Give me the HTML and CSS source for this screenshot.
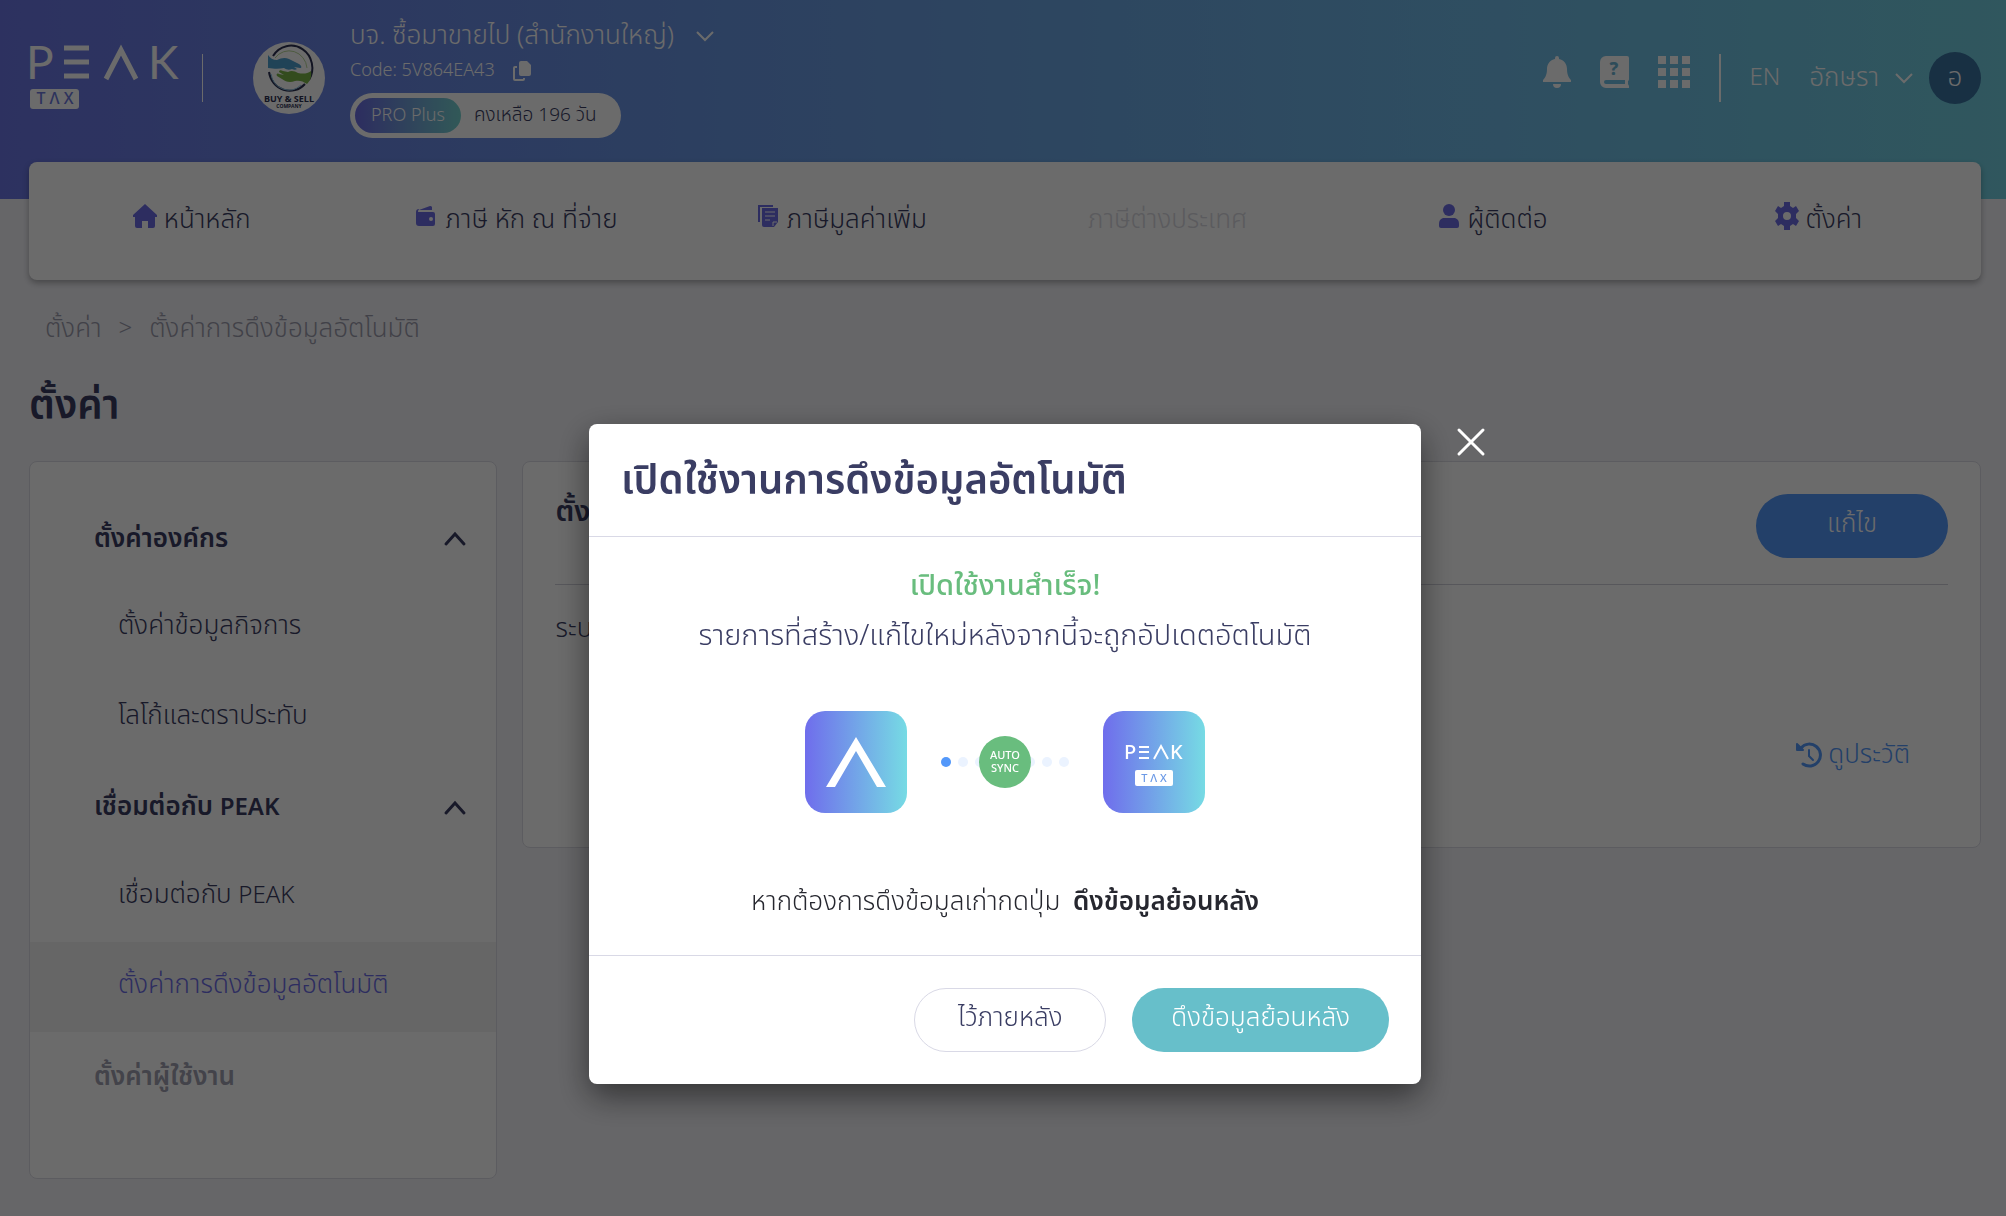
FILE: index.html
```html
<!DOCTYPE html>
<html lang="th">
<head>
    <meta charset="UTF-8">
    <meta name="viewport" content="width=device-width, initial-scale=1.0">
    <title>PEAK TAX</title>
    <link rel="stylesheet" href="styles.css">
</head>
<body>

<header class="header">
    <div class="topbar">
        <a href="#" class="brand" aria-label="PEAK TAX">
            <svg width="148" height="64" viewBox="0 0 148 64">
                <text class="brand-letters" x="-4" y="34">P</text>
                <path d="M34 3h25M34 17h25M34 31h25" fill="none" stroke="#fff" stroke-width="5"/>
                <path d="M76 34L91 5l15 29" fill="none" stroke="#fff" stroke-width="5"/>
                <text class="brand-letters" x="118" y="34">K</text>
                <rect x="0" y="44" width="49" height="20" rx="3" fill="#fff"/>
                <text class="brand-tax" x="25" y="59" text-anchor="middle">T Λ X</text>
            </svg>
        </a>
        <span class="line"></span>
        <svg class="company-logo" width="72" height="72" viewBox="0 0 72 72">
            <circle cx="36" cy="36" r="36" fill="#fff"/>
            <path d="M20 14a21 22 0 0 1 36 24M52 42a21 22 0 0 1-36-12" fill="none" stroke="#2c3052" stroke-width="2"/>
            <path d="M22 16a18 19 0 0 1 32 10" fill="none" stroke="#b9d89a" stroke-width="1"/>
            <path d="M48 43a18 19 0 0 1-30-11" fill="none" stroke="#8cc4e4" stroke-width="1"/>
            <path d="M15 13c2 3 5 5 9 5 4-2 8-3 12-1l10 5c3 2 3 4 1 4l-6-1 3 2c-1 1-3 1-5 0-3 1-5 1-8-1-5 1-9 1-16 0z" fill="#4d9fd0"/>
            <path d="M58 29c1 6-1 10-4 13-4-3-8-4-12-3-5 2-9 1-13-2l-5-3c-1-2 0-3 2-2l5 1-5-3c0-2 2-2 4-1l5 1c3-2 7-1 10 1 5 1 9 1 13-2z" fill="#7ab648"/>
            <text x="36" y="60" class="logo-name" text-anchor="middle">BUY &amp; SELL</text>
            <text x="36" y="66" class="logo-sub" text-anchor="middle">COMPANY</text>
        </svg>
        <div class="company">
            <button class="company-name">บจ. ซื้อมาขายไป (สำนักงานใหญ่)
                <svg width="18" height="12" viewBox="0 0 18 12" fill="none" stroke="currentColor" stroke-width="2"><path d="M1 2l8 8 8-8"/></svg>
            </button>
            <div class="company-code">Code: 5V864EA43
                <button class="copy" aria-label="Copy">
                    <svg width="18" height="20" viewBox="0 0 18 20" fill="currentColor"><path d="M8 0h6l4 4v9a2 2 0 0 1-2 2H8a2 2 0 0 1-2-2V2a2 2 0 0 1 2-2z"/><path d="M4 5H2a2 2 0 0 0-2 2v11a2 2 0 0 0 2 2h8a2 2 0 0 0 2-2v-1h-2v1H2V7h2z"/></svg>
                </button>
            </div>
            <div class="plan"><span class="plan-name">PRO Plus</span>คงเหลือ 196 วัน</div>
        </div>
        <div class="tools">
            <button class="tool" aria-label="Notifications">
                <svg width="28" height="32" viewBox="0 0 28 32" fill="currentColor"><path d="M14 0a2 2 0 0 1 2 2v1c5 1 8 5 8 10 0 6 2 9 4 11v2H0v-2c2-2 4-5 4-11C4 8 7 4 12 3V2a2 2 0 0 1 2-2zM10 28h8a4 4 0 0 1-8 0z"/></svg>
            </button>
            <button class="tool" aria-label="Help">
                <svg width="29" height="32" viewBox="0 0 29 32"><path fill="currentColor" fill-rule="evenodd" d="M6 0h21a2 2 0 0 1 2 2v21a2 2 0 0 1-1 2v3l1 2v2H6a6 6 0 0 1-6-6V6a6 6 0 0 1 6-6zM6 24a2 2 0 0 0 0 4h19v-4z"/><text x="14" y="19" class="book-mark" text-anchor="middle">?</text></svg>
            </button>
            <button class="tool" aria-label="Apps">
                <svg width="32" height="32" viewBox="0 0 32 32" fill="currentColor"><path d="M0 0h8v8H0zM12 0h8v8h-8zM24 0h8v8h-8zM0 12h8v8H0zM12 12h8v8h-8zM24 12h8v8h-8zM0 24h8v8H0zM12 24h8v8h-8zM24 24h8v8h-8z"/></svg>
            </button>
            <span class="line thick"></span>
            <button class="latin">EN</button>
            <button class="user">อักษรา
                <svg width="18" height="12" viewBox="0 0 18 12" fill="none" stroke="currentColor" stroke-width="2"><path d="M1 2l8 8 8-8"/></svg>
                <span class="avatar">อ</span>
            </button>
        </div>
    </div>
    <nav class="menu">
        <a href="#"><svg width="24" height="24" viewBox="0 0 24 24" fill="currentColor"><path d="M12 0l12 11v2h-2v9a2 2 0 0 1-2 2h-5v-7H9v7H4a2 2 0 0 1-2-2v-9H0v-2z"/></svg>หน้าหลัก</a>
        <a href="#"><svg width="22" height="24" viewBox="0 0 22 24"><path fill="currentColor" d="M3 6l11-4a2 2 0 0 1 2 1v3zM2 8h15a2 2 0 0 1 2 2v10a2 2 0 0 1-2 2H3a3 3 0 0 1-3-3V8a3 3 0 0 1 3-3z"/><circle cx="15" cy="15" r="2" fill="#fff"/><path d="M2 7h15" stroke="#fff"/></svg>ภาษี หัก ณ ที่จ่าย</a>
        <a href="#"><svg width="22" height="24" viewBox="0 0 22 24"><path d="M1 18V2h14" fill="none" stroke="currentColor" stroke-width="2"/><path fill="currentColor" d="M4 4h16v14l-4 5H6a2 2 0 0 1-2-2z"/><path d="M7 8h10M7 12h10M7 16h5M15 22v-4h4" fill="none" stroke="#fff"/></svg>ภาษีมูลค่าเพิ่ม</a>
        <a href="#" class="disabled">ภาษีต่างประเทศ</a>
        <a href="#"><svg width="22" height="24" viewBox="0 0 22 24" fill="currentColor"><circle cx="11" cy="6" r="6"/><path d="M5 14h12c3 1 4 3 4 6v2a2 2 0 0 1-2 2H3a2 2 0 0 1-2-2v-2c0-3 1-5 4-6z"/></svg>ผู้ติดต่อ</a>
        <a href="#"><svg width="24" height="28" viewBox="0 0 24 28" fill="currentColor" fill-rule="evenodd"><path d="M9 0h6v4l3 2 3-2 3 5-3 3v4l3 3-3 5-3-2-3 2v4H9v-4l-3-2-3 2-3-5 3-3v-4L0 9l3-5 3 2 3-2zM12 10a4 4 0 1 0 0 8 4 4 0 0 0 0-8z"/></svg>ตั้งค่า</a>
    </nav>
</header>

<main class="page">
    <div class="breadcrumb"><a href="#">ตั้งค่า</a><span class="latin">&gt;</span><a href="#">ตั้งค่าการดึงข้อมูลอัตโนมัติ</a></div>
    <h1>ตั้งค่า</h1>
    <div class="columns">
        <aside class="card sidebar">
            <button class="group">ตั้งค่าองค์กร
                <svg width="22" height="14" viewBox="0 0 22 14" fill="none" stroke="currentColor" stroke-width="3" stroke-linecap="round"><path d="M2 12l9-10 9 10"/></svg>
            </button>
            <a href="#" class="sub">ตั้งค่าข้อมูลกิจการ</a>
            <a href="#" class="sub">โลโก้และตราประทับ</a>
            <button class="group"><span>เชื่อมต่อกับ <span class="latin">PEAK</span></span>
                <svg width="22" height="14" viewBox="0 0 22 14" fill="none" stroke="currentColor" stroke-width="3" stroke-linecap="round"><path d="M2 12l9-10 9 10"/></svg>
            </button>
            <a href="#" class="sub"><span>เชื่อมต่อกับ <span class="latin">PEAK</span></span></a>
            <a href="#" class="sub active">ตั้งค่าการดึงข้อมูลอัตโนมัติ</a>
            <button class="group muted">ตั้งค่าผู้ใช้งาน</button>
        </aside>
        <section class="card content">
            <div class="content-head">
                <h2>ตั้งค่า</h2>
                <button class="btn btn-blue">แก้ไข</button>
            </div>
            <p>ระบบ</p>
            <a href="#" class="history">
                <svg width="26" height="26" viewBox="0 0 26 26" fill="none" stroke="currentColor" stroke-width="3" stroke-linecap="round"><path d="M5 6a11 11 0 1 1 2 16"/><path d="M13 8v6l4 4" stroke-width="2"/><path d="M1 2v6h6z" fill="currentColor" stroke-width="2" stroke-linejoin="round"/></svg>ดูประวัติ</a>
        </section>
    </div>
</main>

<div class="overlay">
    <div class="modal" role="dialog" aria-modal="true" aria-labelledby="modalTitle">
        <button class="close" aria-label="Close">
            <svg width="28" height="28" viewBox="0 0 28 28" fill="none" stroke="currentColor" stroke-width="3" stroke-linecap="round"><path d="M2 2l24 24M26 2L2 26"/></svg>
        </button>
        <div class="modal-header"><h2 id="modalTitle">เปิดใช้งานการดึงข้อมูลอัตโนมัติ</h2></div>
        <div class="modal-body">
            <p class="success">เปิดใช้งานสำเร็จ!</p>
            <p class="lead">รายการที่สร้าง/แก้ไขใหม่หลังจากนี้จะถูกอัปเดตอัตโนมัติ</p>
            <svg class="sync" width="400" height="102" viewBox="0 0 400 102">
                <defs>
                    <linearGradient id="tile"><stop offset="0" stop-color="#6f6dec"/><stop offset="1" stop-color="#76dbe4"/></linearGradient>
                </defs>
                <rect width="102" height="102" rx="20" fill="url(#tile)"/>
                <path d="M51 26l30 50h-9L51 40 30 76h-9z" fill="#fff"/>
                <circle cx="141" cy="51" r="5" fill="#5398fa"/>
                <g fill="#ebf3ff"><circle cx="158" cy="51" r="5"/><circle cx="175" cy="51" r="5"/><circle cx="225" cy="51" r="5"/><circle cx="242" cy="51" r="5"/><circle cx="259" cy="51" r="5"/></g>
                <circle cx="200" cy="51" r="26" fill="#69bd7e"/>
                <text class="sync-text" x="200" y="48" text-anchor="middle">AUTO</text>
                <text class="sync-text" x="200" y="61" text-anchor="middle">SYNC</text>
                <rect x="298" width="102" height="102" rx="20" fill="url(#tile)"/>
                <g class="tile-letters"><text x="319" y="48">P</text><text x="365" y="48">K</text></g>
                <path d="M334 36h10M334 41h10M334 47h10M349 48l7-13 7 13" fill="none" stroke="#fff" stroke-width="2"/>
                <rect x="330" y="59" width="38" height="16" rx="2" fill="#fff"/>
                <text class="tile-tax" x="349" y="71" text-anchor="middle">T Λ X</text>
            </svg>
            <p class="note">หากต้องการดึงข้อมูลเก่ากดปุ่ม <strong>ดึงข้อมูลย้อนหลัง</strong></p>
        </div>
        <div class="modal-footer">
            <button class="btn btn-plain">ไว้ภายหลัง</button>
            <button class="btn btn-teal">ดึงข้อมูลย้อนหลัง</button>
        </div>
    </div>
</div>

</body>
</html>
```

FILE: styles.css
```css
* {
    box-sizing: border-box;
}
body {
    margin: 0;
    font-family: "Noto Sans Thai", "Noto Sans", sans-serif;
    font-size: 26px;
    font-weight: 300;
    line-height: 36px;
    color: #3a3d63;
    background: #f3f3f8;
}
h1, h2, p {
    margin: 0;
}
a {
    color: inherit;
    text-decoration: none;
}
button {
    padding: 0;
    border: none;
    background: none;
    font: inherit;
    color: inherit;
    cursor: pointer;
}
svg {
    flex: none;
    overflow: visible;
}
.latin {
    font-size: 24px;
}
.header {
    padding: 0 25px 0 29px;
    background: linear-gradient(90deg, #6b76e4, #6a98e4 36%, #70bbe6 75%, #72cfe0) no-repeat;
    background-size: 100% 199px;
}
.topbar {
    display: flex;
    align-items: flex-start;
    height: 162px;
    color: #fff;
}
.brand {
    margin: 45px 24px 0 1px;
    height: 64px;
}
.brand-letters {
    font-family: Lato, sans-serif;
    font-size: 46px;
    font-weight: 400;
    fill: #fff;
}
.brand-tax {
    font-size: 16px;
    font-weight: 500;
    fill: #6c78dc;
}
.line {
    width: 1px;
    height: 48px;
    margin-top: 54px;
    background: #fff;
}
.line.thick {
    width: 2px;
    margin: 0;
}
.company-logo {
    margin: 42px 25px 0 50px;
}
.logo-name {
    font-size: 9px;
    font-weight: 700;
    fill: #2c3052;
}
.logo-sub {
    font-size: 5px;
    font-weight: 700;
    fill: #2c3052;
}
.company {
    display: flex;
    flex-direction: column;
    align-items: flex-start;
    padding-top: 18px;
}
.company-name {
    display: flex;
    align-items: center;
    gap: 22px;
}
.company-code {
    display: flex;
    align-items: center;
    gap: 18px;
    font-size: 18px;
    line-height: 34px;
}
.copy {
    display: flex;
}
.plan {
    display: flex;
    align-items: center;
    gap: 13px;
    margin-top: 5px;
    padding: 5px 24px 5px 5px;
    border-radius: 23px;
    font-size: 19px;
    line-height: 35px;
    color: #3a3d63;
    background: #fff;
}
.plan-name {
    padding: 0 16px;
    border-radius: 18px;
    font-size: 18px;
    color: #fff;
    background: linear-gradient(90deg, #6c6ce4, #76d3d0);
}
.tools {
    display: flex;
    align-items: center;
    gap: 29px;
    margin: 52px 0 0 auto;
}
.tool {
    display: flex;
    margin-bottom: 12px;
}
.book-mark {
    font-size: 18px;
    font-weight: 800;
    fill: #6fb5d5;
}
.user {
    display: flex;
    align-items: center;
    gap: 16px;
}
.avatar {
    width: 52px;
    height: 52px;
    border-radius: 50%;
    line-height: 52px;
    background: #39729f;
}
.menu {
    display: grid;
    grid-template-columns: repeat(6, 1fr);
    height: 118px;
    padding-bottom: 2px;
    border-radius: 8px;
    background: #fff;
    box-shadow: 0 3px 6px rgba(0, 0, 0, 0.3);
}
.menu a {
    display: flex;
    align-items: center;
    justify-content: center;
    gap: 7px;
}
.menu svg {
    margin-bottom: 8px;
    color: #6c6ce4;
}
.menu .disabled {
    color: #d8d8e0;
}
.page {
    padding: 29px 25px 0 29px;
}
.breadcrumb {
    display: flex;
    gap: 17px;
    padding-left: 16px;
    line-height: 40px;
    color: #9c9cac;
}
h1 {
    margin: 28px 0 24px;
    font-size: 40px;
    font-weight: 600;
    line-height: 60px;
}
.columns {
    display: flex;
    align-items: flex-start;
    gap: 25px;
}
.card {
    border: 1px solid #dcdce4;
    border-radius: 8px;
    background: #fff;
}
.sidebar {
    width: 24%;
    padding: 32px 0 57px;
}
.group, .sub {
    display: flex;
    align-items: center;
    width: 100%;
}
.group {
    justify-content: space-between;
    height: 89px;
    padding: 0 30px 0 64px;
    font-weight: 600;
}
.sub {
    height: 90px;
    padding: 0 0 4px 88px;
}
.active {
    color: #6c6ce4;
    background: #f3f3f3;
}
.muted {
    color: #a0a0b0;
}
.content {
    flex: 1;
    height: 387px;
    padding: 32px;
}
.content-head {
    display: flex;
    justify-content: space-between;
    height: 91px;
    border-bottom: 1px solid #d0d0da;
}
.content h2 {
    font-size: 29px;
    font-weight: 600;
}
.content p {
    margin-top: 26px;
}
.btn {
    height: 64px;
    min-width: 192px;
    padding: 0 39px 4px;
    border-radius: 32px;
}
.btn-blue {
    color: #fff;
    background: #5398fa;
}
.btn-plain {
    border: 1px solid #d9d9e6;
}
.btn-teal {
    color: #fff;
    background: #67bfca;
}
.history {
    display: flex;
    align-items: center;
    justify-content: flex-end;
    gap: 6px;
    margin: 90px 38px 0 0;
    color: #5398fa;
}
.overlay {
    position: fixed;
    inset: 0;
    display: flex;
    justify-content: center;
    align-items: flex-start;
    padding: 424px 0 0 4px;
    background: rgba(0, 0, 0, 0.58);
}
.modal {
    position: relative;
    width: 832px;
    border-radius: 8px;
    background: #fff;
    box-shadow: 0 12px 32px rgba(0, 0, 0, 0.5);
}
.close {
    position: absolute;
    top: 4px;
    right: -64px;
    height: 28px;
    line-height: 0;
    color: #fff;
}
.modal-header {
    padding: 34px 32px 30px;
    border-bottom: 1px solid #d9d9e6;
}
.modal-header h2 {
    font-size: 40px;
    font-weight: 600;
    line-height: 48px;
}
.modal-body {
    padding: 24px 32px;
    text-align: center;
    height: 418px;
}
.success, .lead {
    font-size: 29px;
    line-height: 50px;
}
.success {
    font-weight: 500;
    color: #69bd7e;
}
.sync {
    display: block;
    margin: 50px auto 64px;
}
.sync-text {
    font-size: 11px;
    font-weight: 500;
    fill: #fff;
}
.tile-letters {
    font-size: 20px;
    font-weight: 500;
    fill: #fff;
}
.tile-tax {
    font-size: 11px;
    font-weight: 500;
    fill: #6c9ae6;
}
.note {
    line-height: 50px;
    color: #26272f;
}
.note strong {
    margin-left: 6px;
    font-weight: 600;
}
.modal-footer {
    display: flex;
    justify-content: flex-end;
    gap: 26px;
    padding: 32px;
    border-top: 1px solid #d9d9e6;
}
```
